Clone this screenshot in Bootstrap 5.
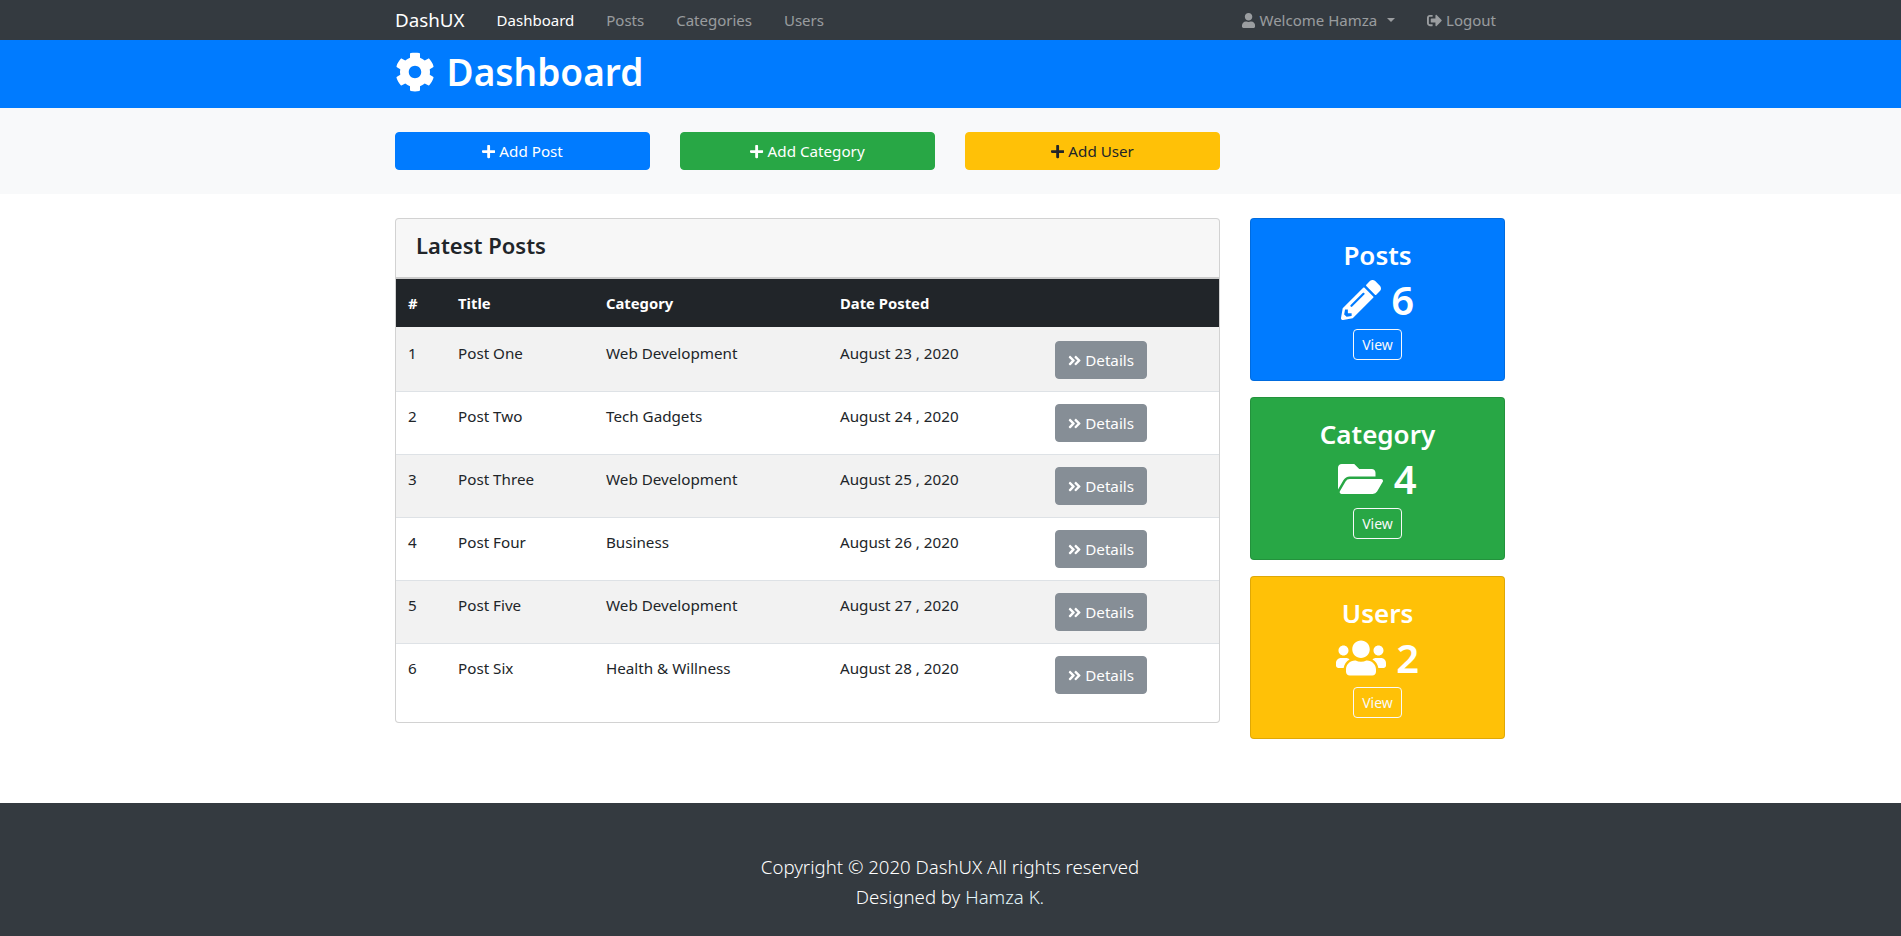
<!DOCTYPE html>
<html lang="en">
<head>
<meta charset="utf-8">
<title>DashUX</title>
<link href="https://cdn.jsdelivr.net/npm/bootstrap@5.3.0/dist/css/bootstrap.min.css" rel="stylesheet">
<style>
body{font-family:"Noto Sans","Open Sans",sans-serif;color:#212529;font-size:15.2px;}
.box-wide{max-width:1141px;margin:0 auto;padding:0 16px 0 15px;width:100%;}
.gut{--bs-gutter-x:30px;--bs-gutter-y:0;}
h1,h2,h3,h4{font-weight:600;line-height:1.2;}
.ic{fill:currentColor;height:1em;vertical-align:-.125em;display:inline-block;}
.btn{--bs-btn-border-radius:4px;--bs-btn-font-size:15.2px;--bs-btn-padding-y:6px;--bs-btn-line-height:24px;}
.topbar{background:#343a40;padding:0;--bs-navbar-nav-link-padding-x:16px;}
.topbar .navbar-brand{color:#fff;font-size:18.8px;padding:5px 0;margin-right:16px;line-height:30px;}
.topbar .nav-link{color:rgba(255,255,255,.5);padding-top:8px;padding-bottom:8px;line-height:24px;font-size:15px;}
.topbar .nav-link.active{color:#fff;}
.topbar .dropdown-toggle::after{margin-left:10px;}
.right-nav{margin-right:-7px;}
.hero-band{background:#007bff;color:#fff;padding:10px 0 14px;}
.hero-band h1{font-size:37px;margin:0;line-height:44px;}
.hero-band .ic{height:40px;vertical-align:-6px;margin-right:2px;}
.act-band{background:#f8f9fa;padding:24px 0;}
.b-blue{background:#007bff;border-color:#007bff;color:#fff;}
.b-green{background:#28a745;border-color:#28a745;color:#fff;}
.b-amber{background:#ffc107;border-color:#ffc107;color:#212529;}
.b-grey{background:#868e96;border-color:#868e96;color:#fff;}
.b-grey:hover,.b-blue:hover,.b-green:hover{color:#fff;}
.main-band{padding:24px 0 48px;}
.post-card{margin-bottom:16px;--bs-card-border-radius:4px;--bs-card-inner-border-radius:3px;}
.post-card .card-header{padding:12px 20px;background:rgba(0,0,0,.03);border-bottom-width:2px;}
.post-card h4{font-size:22px;margin:0 0 5.2px;line-height:28.8px;}
.post-table{margin-bottom:16px;table-layout:fixed;}
.post-table>thead th{background:#212529;color:#fff;border:0;padding:12px;font-weight:700;font-size:14.8px;line-height:24px;}
.post-table>tbody{border-top:2px solid #f2f2f2;}
.post-table>tbody td{padding:12px;vertical-align:top;font-size:15.2px;line-height:24px;border-bottom:1px solid #dee2e6;}
.post-table>tbody tr:last-child td{border-bottom:0;}
.post-table>tbody>tr:nth-of-type(odd)>td{--bs-table-accent-bg:rgba(0,0,0,.05);}
.cn{width:50px}.ct{width:148px}.cc{width:234px}.cd{width:215px}
.stat{border-radius:4px;color:#fff;text-align:center;padding:20px;margin-bottom:16px;border:1px solid rgba(0,0,0,.125);}
.stat h3{font-size:26px;margin:0 0 8px;line-height:32px;}
.stat h2{font-size:40px;margin:0 0 8px;line-height:42px;}
.stat .btn{--bs-btn-font-size:14px;--bs-btn-padding-y:4px;--bs-btn-padding-x:8px;--bs-btn-line-height:21px;font-size:14px;}
.s-blue{background:#007bff}.s-green{background:#28a745}.s-amber{background:#ffc107}
.page-col{min-height:100vh;}
.foot{background:#343a40;color:#fff;padding:49px 0 0;text-align:center;font-size:18.6px;font-weight:300;line-height:30px;}
.foot p{margin:0;}
.foot a{color:#e3f6fb;text-decoration:none;}
</style>
</head>
<body class="d-flex flex-column page-col">
<svg width="0" height="0" class="position-absolute" aria-hidden="true">
<defs>
<symbol id="i-cog" viewBox="0 0 512 512"><path d="M487.4 315.7l-42.6-24.6c4.3-23.2 4.3-47 0-70.2l42.6-24.6c4.9-2.8 7.1-8.6 5.5-14-11.1-35.6-30-67.8-54.7-94.6-3.8-4.1-10-5.1-14.8-2.3L380.8 110c-17.9-15.4-38.5-27.3-60.8-35.1V25.8c0-5.6-3.9-10.5-9.4-11.7-36.7-8.2-74.3-7.8-109.2 0-5.5 1.2-9.4 6.1-9.4 11.7V75c-22.2 7.9-42.8 19.8-60.8 35.1L88.7 85.5c-4.9-2.8-11-1.9-14.8 2.3-24.7 26.7-43.6 58.9-54.7 94.6-1.7 5.4.6 11.2 5.5 14L67.3 221c-4.3 23.2-4.3 47 0 70.2l-42.6 24.6c-4.9 2.8-7.1 8.6-5.5 14 11.1 35.6 30 67.8 54.7 94.6 3.8 4.1 10 5.1 14.8 2.3l42.6-24.6c17.9 15.4 38.5 27.3 60.8 35.1v49.2c0 5.6 3.9 10.5 9.4 11.7 36.7 8.2 74.3 7.8 109.2 0 5.5-1.2 9.4-6.1 9.4-11.7v-49.2c22.2-7.9 42.8-19.8 60.8-35.1l42.6 24.6c4.9 2.8 11 1.9 14.8-2.3 24.7-26.7 43.6-58.9 54.7-94.6 1.5-5.5-.7-11.3-5.6-14.1zM256 336c-44.1 0-80-35.9-80-80s35.9-80 80-80 80 35.9 80 80-35.9 80-80 80z"/></symbol>
<symbol id="i-plus" viewBox="0 0 448 512"><path d="M416 208H272V64c0-17.67-14.33-32-32-32h-32c-17.67 0-32 14.33-32 32v144H32c-17.67 0-32 14.33-32 32v32c0 17.67 14.33 32 32 32h144v144c0 17.67 14.33 32 32 32h32c17.67 0 32-14.33 32-32V304h144c17.67 0 32-14.33 32-32v-32c0-17.67-14.33-32-32-32z"/></symbol>
<symbol id="i-user" viewBox="0 0 448 512"><path d="M224 256c70.7 0 128-57.3 128-128S294.7 0 224 0 96 57.3 96 128s57.3 128 128 128zm89.6 32h-16.7c-22.2 10.2-46.9 16-72.9 16s-50.6-5.8-72.9-16h-16.7C60.2 288 0 348.2 0 422.4V464c0 26.5 21.5 48 48 48h352c26.5 0 48-21.5 48-48v-41.6c0-74.2-60.2-134.4-134.4-134.4z"/></symbol>
<symbol id="i-out" viewBox="0 0 512 512"><path d="M497 273L329 441c-15 15-41 4.5-41-17v-96H152c-13.3 0-24-10.7-24-24v-96c0-13.3 10.7-24 24-24h136V88c0-21.4 25.9-32 41-17l168 168c9.3 9.4 9.3 24.6 0 34zM192 436v-40c0-6.6-5.4-12-12-12H96c-17.7 0-32-14.3-32-32V160c0-17.7 14.3-32 32-32h84c6.6 0 12-5.4 12-12V76c0-6.6-5.4-12-12-12H96c-53 0-96 43-96 96v192c0 53 43 96 96 96h84c6.6 0 12-5.4 12-12z"/></symbol>
<symbol id="i-dbl" viewBox="0 0 448 512"><path d="M224.3 273l-136 136c-9.4 9.4-24.6 9.4-33.9 0l-22.6-22.6c-9.4-9.4-9.4-24.6 0-33.9l96.4-96.4-96.4-96.4c-9.4-9.4-9.4-24.6 0-33.9L54.3 103c9.4-9.4 24.6-9.4 33.9 0l136 136c9.5 9.4 9.5 24.6.1 34zm192-34l-136-136c-9.4-9.4-24.6-9.4-33.9 0l-22.6 22.6c-9.4 9.4-9.4 24.6 0 33.9l96.4 96.4-96.4 96.4c-9.4 9.4-9.4 24.6 0 33.9l22.6 22.6c9.4 9.4 24.6 9.4 33.9 0l136-136c9.4-9.2 9.4-24.4 0-33.8z"/></symbol>
<symbol id="i-pen" viewBox="0 0 512 512"><path d="M497.9 142.1l-46.1 46.1c-4.7 4.7-12.3 4.7-17 0l-111-111c-4.7-4.7-4.7-12.3 0-17l46.1-46.1c18.7-18.7 49.1-18.7 67.9 0l60.1 60.1c18.8 18.7 18.8 49.1 0 67.9zM284.2 99.8L21.6 362.4.4 483.9c-2.9 16.4 11.4 30.6 27.8 27.8l121.5-21.3 262.6-262.6c4.7-4.7 4.7-12.3 0-17l-111-111c-4.8-4.7-12.4-4.7-17.1 0zM124.1 339.9c-5.5-5.5-5.5-14.3 0-19.8l154-154c5.5-5.5 14.3-5.5 19.8 0s5.5 14.3 0 19.8l-154 154c-5.5 5.5-14.3 5.5-19.8 0zM88 424h48v36.3l-64.5 11.3-31.1-31.1L51.7 376H88v48z"/></symbol>
<symbol id="i-folder" viewBox="0 0 576 512"><path d="M572.694 292.093L500.27 416.248A63.997 63.997 0 0 1 444.989 448H45.025c-18.523 0-30.064-20.093-20.731-36.093l72.424-124.155A64 64 0 0 1 152 256h399.964c18.523 0 30.064 20.093 20.73 36.093zM152 224h328v-48c0-26.51-21.49-48-48-48H272l-64-64H48C21.49 64 0 85.49 0 112v278.046l69.077-118.418C86.214 242.25 117.989 224 152 224z"/></symbol>
<symbol id="i-users" viewBox="0 0 640 512"><path d="M96 224c35.3 0 64-28.7 64-64s-28.7-64-64-64-64 28.7-64 64 28.7 64 64 64zm448 0c35.3 0 64-28.7 64-64s-28.7-64-64-64-64 28.7-64 64 28.7 64 64 64zm32 32h-64c-17.6 0-33.5 7.1-45.1 18.6 40.3 22.1 68.9 62 75.1 109.4h66c17.7 0 32-14.3 32-32v-32c0-35.3-28.7-64-64-64zm-256 0c61.9 0 112-50.1 112-112S381.9 32 320 32 208 82.1 208 144s50.1 112 112 112zm76.8 32h-8.3c-20.8 10-43.9 16-68.5 16s-47.6-6-68.5-16h-8.3C179.6 288 128 339.6 128 403.2V432c0 26.5 21.5 48 48 48h288c26.5 0 48-21.5 48-48v-28.8c0-63.6-51.6-115.2-115.2-115.2zm-223.7-13.4C161.5 263.1 145.6 256 128 256H64c-35.3 0-64 28.7-64 64v32c0 17.7 14.3 32 32 32h65.9c6.3-47.4 34.9-87.3 75.2-109.4z"/></symbol>
</defs>
</svg>

<nav class="navbar navbar-expand topbar">
  <div class="box-wide d-flex align-items-center">
    <a class="navbar-brand" href="#">DashUX</a>
    <ul class="navbar-nav me-auto">
      <li class="nav-item"><a class="nav-link active" href="#">Dashboard</a></li>
      <li class="nav-item"><a class="nav-link" href="#">Posts</a></li>
      <li class="nav-item"><a class="nav-link" href="#">Categories</a></li>
      <li class="nav-item"><a class="nav-link" href="#">Users</a></li>
    </ul>
    <ul class="navbar-nav right-nav">
      <li class="nav-item dropdown"><a class="nav-link dropdown-toggle" href="#"><svg class="ic" viewBox="0 0 448 512"><use href="#i-user"/></svg> Welcome Hamza</a></li>
      <li class="nav-item"><a class="nav-link" href="#"><svg class="ic" viewBox="0 0 512 512"><use href="#i-out"/></svg> Logout</a></li>
    </ul>
  </div>
</nav>

<header class="hero-band">
  <div class="box-wide"><h1><svg class="ic" viewBox="0 0 512 512"><use href="#i-cog"/></svg> Dashboard</h1></div>
</header>

<section class="act-band">
  <div class="box-wide">
    <div class="row gut">
      <div class="col-3"><a href="#" class="btn b-blue w-100"><svg class="ic" viewBox="0 0 448 512"><use href="#i-plus"/></svg> Add Post</a></div>
      <div class="col-3"><a href="#" class="btn b-green w-100"><svg class="ic" viewBox="0 0 448 512"><use href="#i-plus"/></svg> Add Category</a></div>
      <div class="col-3"><a href="#" class="btn b-amber w-100"><svg class="ic" viewBox="0 0 448 512"><use href="#i-plus"/></svg> Add User</a></div>
    </div>
  </div>
</section>

<section class="main-band">
  <div class="box-wide">
    <div class="row gut">
      <div class="col-9">
        <div class="card post-card">
          <div class="card-header"><h4>Latest Posts</h4></div>
          <table class="table table-striped post-table">
            <thead><tr><th class="cn">#</th><th class="ct">Title</th><th class="cc">Category</th><th class="cd">Date Posted</th><th></th></tr></thead>
            <tbody>
              <tr><td>1</td><td>Post One</td><td>Web Development</td><td>August 23 , 2020</td><td><a href="#" class="btn b-grey"><svg class="ic" viewBox="0 0 448 512"><use href="#i-dbl"/></svg> Details</a></td></tr>
              <tr><td>2</td><td>Post Two</td><td>Tech Gadgets</td><td>August 24 , 2020</td><td><a href="#" class="btn b-grey"><svg class="ic" viewBox="0 0 448 512"><use href="#i-dbl"/></svg> Details</a></td></tr>
              <tr><td>3</td><td>Post Three</td><td>Web Development</td><td>August 25 , 2020</td><td><a href="#" class="btn b-grey"><svg class="ic" viewBox="0 0 448 512"><use href="#i-dbl"/></svg> Details</a></td></tr>
              <tr><td>4</td><td>Post Four</td><td>Business</td><td>August 26 , 2020</td><td><a href="#" class="btn b-grey"><svg class="ic" viewBox="0 0 448 512"><use href="#i-dbl"/></svg> Details</a></td></tr>
              <tr><td>5</td><td>Post Five</td><td>Web Development</td><td>August 27 , 2020</td><td><a href="#" class="btn b-grey"><svg class="ic" viewBox="0 0 448 512"><use href="#i-dbl"/></svg> Details</a></td></tr>
              <tr><td>6</td><td>Post Six</td><td>Health &amp; Willness</td><td>August 28 , 2020</td><td><a href="#" class="btn b-grey"><svg class="ic" viewBox="0 0 448 512"><use href="#i-dbl"/></svg> Details</a></td></tr>
            </tbody>
          </table>
        </div>
      </div>
      <div class="col-3">
        <div class="stat s-blue"><h3>Posts</h3><h2><svg class="ic" viewBox="0 0 512 512"><use href="#i-pen"/></svg> 6</h2><a href="#" class="btn btn-sm btn-outline-light">View</a></div>
        <div class="stat s-green"><h3>Category</h3><h2><svg class="ic" viewBox="0 0 576 512"><use href="#i-folder"/></svg> 4</h2><a href="#" class="btn btn-sm btn-outline-light">View</a></div>
        <div class="stat s-amber"><h3>Users</h3><h2><svg class="ic" viewBox="0 0 640 512"><use href="#i-users"/></svg> 2</h2><a href="#" class="btn btn-sm btn-outline-light">View</a></div>
      </div>
    </div>
  </div>
</section>

<footer class="foot flex-grow-1">
  <div class="box-wide">
    <p>Copyright © 2020 DashUX All rights reserved</p>
    <p>Designed by <a href="#">Hamza K.</a></p>
  </div>
</footer>
<script src="https://cdn.jsdelivr.net/npm/bootstrap@5.3.0/dist/js/bootstrap.bundle.min.js"></script>
</body>
</html>
